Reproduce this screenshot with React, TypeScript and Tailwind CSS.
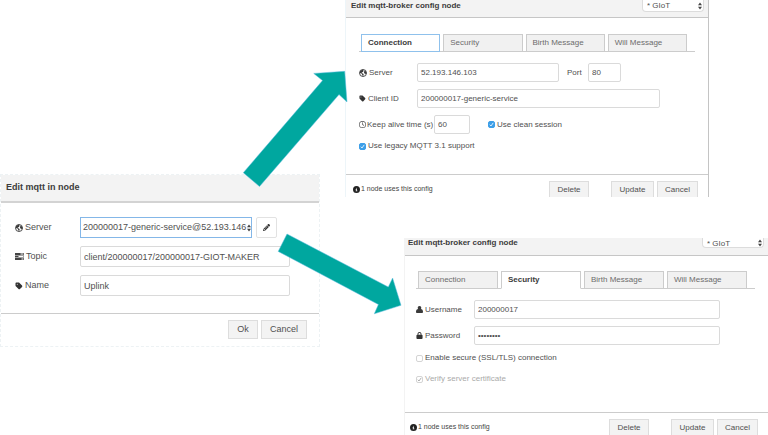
import type { ReactNode } from 'react';
import { clsx } from 'clsx';
import { FaCircleInfo, FaLock, FaPencil, FaRegClock, FaTag } from 'react-icons/fa6';

const TABS = ['Connection', 'Security', 'Birth Message', 'Will Message'];

export default function App() {
  return (
    <main className="relative flex items-start gap-[25px] overflow-hidden bg-white font-['Liberation_Sans',Arial,sans-serif] text-[#505050]">
      <div className="w-5/12 shrink-0 pt-[174px]">
        <MqttInDialog />
      </div>
      <div className="flex min-w-0 flex-1 flex-col gap-[41px]">
        <div className="mr-[59px]">
          <BrokerDialog active="Connection">
            <ConnectionForm />
          </BrokerDialog>
        </div>
        <div className="ml-[59px]">
          <BrokerDialog active="Security">
            <SecurityForm />
          </BrokerDialog>
        </div>
      </div>
      <Arrows />
    </main>
  );
}

function MqttInDialog() {
  return (
    <section className="border border-dashed border-[#edf2f4] bg-white text-[9px]">
      <header className="flex h-7 items-center border-b-2 border-solid border-[#d3d3d3] bg-[#f3f3f3] px-[5px]">
        <h2 className="font-bold text-[#3c3c3c]">Edit mqtt in node</h2>
      </header>
      <div className="flex flex-col gap-2 pt-[14px] pr-[29px] pb-[17px] pl-[14px]">
        <div className="flex h-[21px] items-center">
          <Label id="in-server" icon={<GlobeIcon />} wide>Server</Label>
          <div className="flex h-full flex-1 gap-1 pr-[13px]">
            <div className="relative h-full min-w-0 flex-1">
              <select
                id="in-server"
                className="h-full w-full appearance-none overflow-hidden border border-[#84b7e8] bg-white pl-[2px] outline-none"
              >
                <option>200000017-generic-service@52.193.146</option>
              </select>
              <UpDown className="right-px" />
            </div>
            <button type="button" aria-label="Edit server" className="flex w-[21px] items-center justify-center rounded-xs border border-[#e2e2e2]">
              <FaPencil className="size-[7px] text-[#333]" />
            </button>
          </div>
        </div>
        <div className="flex h-[21px] items-center">
          <Label id="in-topic" icon={<TasksIcon />} wide>Topic</Label>
          <TextInput id="in-topic" value="client/200000017/200000017-GIOT-MAKER" className="flex-1" />
        </div>
        <div className="flex h-[21px] items-center">
          <Label id="in-name" icon={<FaTag className="size-2 text-[#333]" />} wide>Name</Label>
          <TextInput id="in-name" value="Uplink" className="flex-1" />
        </div>
      </div>
      <footer className="flex justify-end gap-[3px] border-t border-solid border-[#ccc] pt-[6px] pr-3 pb-[7px]">
        <button type="button" className="h-[19px] w-[30px] border border-[#ddd] bg-[#f3f3f3]">Ok</button>
        <button type="button" className="h-[19px] w-[46px] border border-[#ddd] bg-[#f3f3f3]">Cancel</button>
      </footer>
    </section>
  );
}

function BrokerDialog({ active, children }: { active: string; children: ReactNode }) {
  const first = active === 'Connection';
  return (
    <section
      className={clsx(
        'border-l border-solid bg-white text-[8px]',
        first ? 'border-r border-l-[#edf5f9] border-r-[#c4c4c4]' : 'border-l-[#f3f3f3]',
      )}
    >
      <header className={clsx('flex h-[18px] items-start justify-between border-b border-[#c6c6c6] bg-[#f3f3f3] pr-1', first ? 'pl-[5px]' : 'pl-[3px]')}>
        <h2 className={clsx('font-bold text-[#3c3c3c]', first ? 'leading-[11px]' : 'leading-[9px]')}>
          Edit mqtt-broker config node
        </h2>
        <div className={clsx('relative w-[62px]', first ? 'h-3' : 'h-[10px]')}>
          <select
            aria-label="Scope"
            className="block h-full w-full appearance-none rounded-b-sm border border-t-0 border-[#dcdcdc] bg-white pl-1 outline-none"
          >
            <option>* GIoT</option>
          </select>
          <UpDown className="right-[2px]" />
        </div>
      </header>

      <div className={clsx('h-[156px] pr-[13px]', first ? 'pt-4 pl-[13px]' : 'pt-[15px] pl-[11px]')}>
        <nav role="tablist" className="flex gap-[3px] border-b border-[#ccc] pr-2 pl-[2px]">
          {TABS.map((tab) => (
            <button
              key={tab}
              type="button"
              role="tab"
              aria-selected={tab === active}
              className={clsx(
                '-mb-px h-[18px] min-w-0 flex-1 border pl-[6px] text-left',
                tab !== active && 'border-[#ccc] bg-[#f1f1f1] text-[#6c6c6c]',
                tab === active && 'bg-white font-bold text-[#3c3c3c]',
                tab === active && first && 'border-[#8fc1ec]',
                tab === active && !first && 'border-[#ccc] border-b-white',
              )}
            >
              {tab}
            </button>
          ))}
        </nav>
        {children}
      </div>

      <footer className={clsx('flex h-[23px] items-start border-t border-[#ccc] pt-[6px] pr-[10px]', first ? 'pl-[7px]' : 'pl-[5px]')}>
        <span className="flex h-4 items-center gap-px text-[7px] text-[#444]">
          <FaCircleInfo className="size-[7px] text-[#222]" />
          1 node uses this config
        </span>
        <button type="button" className="mr-[22px] ml-auto h-4 w-10 border border-b-0 border-[#ddd] bg-[#f3f3f3]">Delete</button>
        <button type="button" className="mr-[3px] h-4 w-[43px] border border-b-0 border-[#ddd] bg-[#f3f3f3]">Update</button>
        <button type="button" className="h-4 w-[41px] border border-b-0 border-[#ddd] bg-[#f3f3f3]">Cancel</button>
      </footer>
    </section>
  );
}

function ConnectionForm() {
  return (
    <div className="pt-[11px]">
      <div className="flex h-[19px] items-center">
        <Label id="server" icon={<GlobeIcon />}>Server</Label>
        <TextInput id="server" value="52.193.146.103" className="w-[142px]" />
        <label htmlFor="port" className="w-[29px] pl-2">Port</label>
        <TextInput id="port" value="80" className="w-[33px]" />
      </div>
      <div className="mt-[7px] flex h-[19px] items-center">
        <Label id="client" icon={<FaTag className="size-[7px] text-[#333]" />}>Client ID</Label>
        <TextInput id="client" value="200000017-generic-service" className="mr-[35px] flex-1" />
      </div>
      <div className="mt-[7px] flex h-[19px] items-center">
        <label htmlFor="keepalive" className="flex w-[75px] items-center gap-px whitespace-nowrap">
          <FaRegClock className="size-[7px]" />
          Keep alive time (s)
        </label>
        <TextInput id="keepalive" value="60" className="mr-[18px] w-9" />
        <CheckBox label="Use clean session" checked />
      </div>
      <div className="mt-[7px]">
        <CheckBox label="Use legacy MQTT 3.1 support" checked />
      </div>
    </div>
  );
}

function SecurityForm() {
  return (
    <div className="pt-[11px]">
      <div className="flex h-[19px] items-center">
        <Label id="username" icon={<UserIcon />}>Username</Label>
        <TextInput id="username" value="200000017" className="mr-[35px] flex-1" />
      </div>
      <div className="mt-[7px] flex h-[19px] items-center">
        <Label id="password" icon={<FaLock className="size-[7px] text-[#333]" />}>Password</Label>
        <TextInput id="password" type="password" value="password" className="mr-[35px] flex-1" />
      </div>
      <div className="mt-2 flex flex-col gap-[11px]">
        <CheckBox label="Enable secure (SSL/TLS) connection" />
        <CheckBox label="Verify server certificate" checked disabled />
      </div>
    </div>
  );
}

function Label({ id, icon, wide, children }: { id: string; icon: ReactNode; wide?: boolean; children: ReactNode }) {
  return (
    <label htmlFor={id} className={clsx('flex shrink-0 items-center gap-[2px]', wide ? 'w-[65px]' : 'w-[58px]')}>
      {icon}
      {children}
    </label>
  );
}

function TextInput({ id, value, type = 'text', className }: { id: string; value: string; type?: string; className?: string }) {
  return (
    <input
      id={id}
      type={type}
      defaultValue={value}
      className={clsx('h-full min-w-0 rounded-xs border border-[#dadada] bg-white px-[3px] outline-none', className)}
    />
  );
}

function CheckBox({ label, checked, disabled }: { label: string; checked?: boolean; disabled?: boolean }) {
  return (
    <label className={clsx('flex h-[10px] items-center gap-[2px]', disabled && 'text-[#aaa]')}>
      <span className="relative size-[7px]">
        <input
          type="checkbox"
          defaultChecked={checked}
          disabled={disabled}
          className="block size-[7px] appearance-none rounded-xs border border-[#d4d4d4] bg-white enabled:checked:border-[#3d9fe8] enabled:checked:bg-[#3d9fe8]"
        />
        {checked && (
          <svg
            viewBox="0 0 7 7"
            className={clsx('pointer-events-none absolute inset-0 size-[7px]', disabled ? 'text-[#999]' : 'text-white')}
          >
            <path d="M1.8 3.7 3 5 5.2 1.9" fill="none" stroke="currentColor" strokeWidth=".8" />
          </svg>
        )}
      </span>
      {label}
    </label>
  );
}

function UpDown({ className }: { className: string }) {
  return (
    <svg viewBox="0 0 4 8" className={clsx('pointer-events-none absolute inset-y-0 my-auto h-2 w-1', className)}>
      <path d="M0 3.3 2 .5l2 2.8zM0 4.7h4L2 7.5z" fill="#444" />
    </svg>
  );
}

function GlobeIcon() {
  return (
    <svg viewBox="0 0 16 16" className="size-2">
      <circle cx="8" cy="8" r="7" fill="#fff" stroke="#3a3a3a" strokeWidth="1.8" />
      <path d="M2 4.5 6 1.5l3.5.5L8 4l1 1.5-2.5 1L5 8l3 1 1.5 2L8 14.5 6.5 12 5.5 9.5 2 8zM11 3l3 2 1 4-2.5 1-2-1.5L10 6.5z" fill="#3a3a3a" />
    </svg>
  );
}

function UserIcon() {
  return (
    <svg viewBox="0 0 14 14" className="size-[7px]">
      <path d="M7 0a3.5 3.7 0 0 1 2.6 6.2C12.400 6.600 14 8.500 14 11.500 14 13.200 13.200 14 11.800 14H2.200C.8 14 0 13.200 0 11.500 0 8.500 1.600 6.600 4.400 6.200A3.500 3.700 0 0 1 7 0z" fill="#3a3a3a" />
    </svg>
  );
}

function TasksIcon() {
  return (
    <svg viewBox="0 0 18 14" className="h-[7px] w-[9px]">
      <path d="M0 0h18v4H0zM0 5h18v4H0zM0 10h18v4H0z" fill="#444" />
      <path d="M11 1.2h6v1.600h-6zM7 6.200h10v1.600H7zM13 11.200h4v1.600h-4z" fill="#fff" />
    </svg>
  );
}

function Arrows() {
  return (
    <svg
      viewBox="0 0 768 435"
      preserveAspectRatio="xMinYMin meet"
      className="pointer-events-none absolute inset-0 h-full w-full"
    >
      <g fill="#00a79f" stroke="#5fbde0" strokeWidth=".5">
        <path d="M243.3 172.7 322.5 80.6 313.7 73.4 344.7 71.3 347 102 339 94.6 259.5 186.5z" />
        <path d="M287 234 388.3 287 392.6 278 401 305.3 374.3 313.8 378.4 304.5 278.2 251.4z" />
      </g>
    </svg>
  );
}
